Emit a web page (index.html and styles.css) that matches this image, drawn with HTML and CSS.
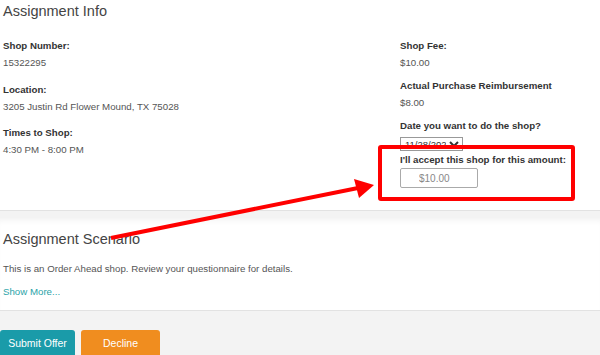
FILE: index.html
```html
<!DOCTYPE html>
<html lang="en">
<head>
  <meta charset="UTF-8" />
  <meta name="viewport" content="width=device-width, initial-scale=1.0"/>
  <title>Assignment</title>
  <link rel="stylesheet" href="styles.css">
</head>
<body>
  <div class="card info">
    <h2>Assignment Info</h2>
    <div class="info-grid">
      <div class="col left">
        <div class="field">
          <label>Shop Number:</label>
          <div class="value">15322295</div>
        </div>
        <div class="field">
          <label>Location:</label>
          <div class="value">3205 Justin Rd Flower Mound, TX 75028</div>
        </div>
        <div class="field">
          <label>Times to Shop:</label>
          <div class="value">4:30 PM - 8:00 PM</div>
        </div>
      </div>
      <div class="col right">
        <div class="field">
          <label>Shop Fee:</label>
          <div class="value">$10.00</div>
        </div>
        <div class="field">
          <label>Actual Purchase Reimbursement</label>
          <div class="value">$8.00</div>
        </div>
        <div class="field">
          <label>Date you want to do the shop?</label>
          <select class="date-select">
            <option>11/28/2020</option>
          </select>
        </div>
        <div class="field">
          <label>I'll accept this shop for this amount:</label>
          <input type="text" class="amount" value="$10.00" />
        </div>
      </div>
    </div>
    <div class="highlight"></div>
  </div>

  <div class="card scenario">
    <h2>Assignment Scenario</h2>
    <p>This is an Order Ahead shop. Review your questionnaire for details.</p>
    <a href="#" class="more">Show More...</a>
  </div>

  <div class="actions">
    <button class="btn submit">Submit Offer</button>
    <button class="btn decline">Decline</button>
  </div>

  <!-- annotation arrow -->
  <svg class="arrow" width="600" height="355" viewBox="0 0 600 355">
    <line x1="111" y1="238" x2="358" y2="188" stroke="#f00" stroke-width="4" />
    <polygon points="374,185 354,179 359,198" fill="#f00" />
  </svg>
</body>
</html>
```

FILE: styles.css
```css
body {
  font-family: "Liberation Sans", Arial, sans-serif;
  font-size: 9.7px;
  margin: 0;
  background: #f3f3f3;
  color: #555;
  position: relative;
  height: 355px;
  overflow: hidden;
}
h2 {
  font-size: 14.5px;
  font-weight: normal;
  color: #444;
  line-height: 17px;
  margin: 0;
}
.card {
  background: white;
  padding: 0 3px;
}
.info {
  position: relative;
  padding-top: 3px;
  padding-bottom: 22px;
  border-bottom: 1px solid #e2e2e2;
}
.info-grid {
  display: grid;
  grid-template-columns: 1fr 197px;
  margin-top: 17px;
}
.field label {
  display: block;
  font-weight: bold;
  color: #333;
  line-height: 17px;
}
.value {
  line-height: 17px;
}
.left .field {
  margin-bottom: 9.5px;
}
.right .field {
  margin-bottom: 6px;
}
.right .field:nth-child(3) {
  margin-bottom: 0;
}
.right .field:last-child {
  margin-bottom: 0;
}
.date-select {
  display: block;
  margin-top: 3px;
  height: 14px;
  width: 63px;
  font-family: inherit;
  font-size: 9.5px;
  padding: 0;
  border: 1px solid #999;
  background: white;
  color: #333;
}
.amount {
  display: block;
  width: 78px;
  height: 20px;
  box-sizing: border-box;
  border: 1px solid #aaa;
  border-radius: 2px;
  padding: 0 0 0 18px;
  font-family: inherit;
  font-size: 10px;
  color: #888;
}
.highlight {
  position: absolute;
  left: 378px;
  top: 145px;
  width: 197px;
  height: 56px;
  box-sizing: border-box;
  border: 4px solid #f00;
  border-radius: 3px;
}
.scenario {
  margin-top: 7px;
  padding-top: 13px;
  padding-bottom: 10px;
  border-bottom: 1px solid #e2e2e2;
  box-shadow: inset 0 6px 6px -4px rgba(0,0,0,0.06);
}
.scenario p {
  margin: 12px 0 6px;
  line-height: 17px;
}
.more {
  display: block;
  color: #2aa3a8;
  text-decoration: none;
  line-height: 17px;
}
.actions {
  display: flex;
  gap: 6px;
  margin-top: 19px;
}
.btn {
  border: none;
  border-radius: 3px 3px 0 0;
  color: white;
  font-family: inherit;
  font-size: 10.5px;
  height: 32px;
  padding: 0 0 6px;
}
.submit {
  width: 75px;
  background: #1a9ba9;
}
.decline {
  width: 79px;
  background: #f08d1f;
}
.arrow {
  position: absolute;
  left: 0;
  top: 0;
  pointer-events: none;
}
```
